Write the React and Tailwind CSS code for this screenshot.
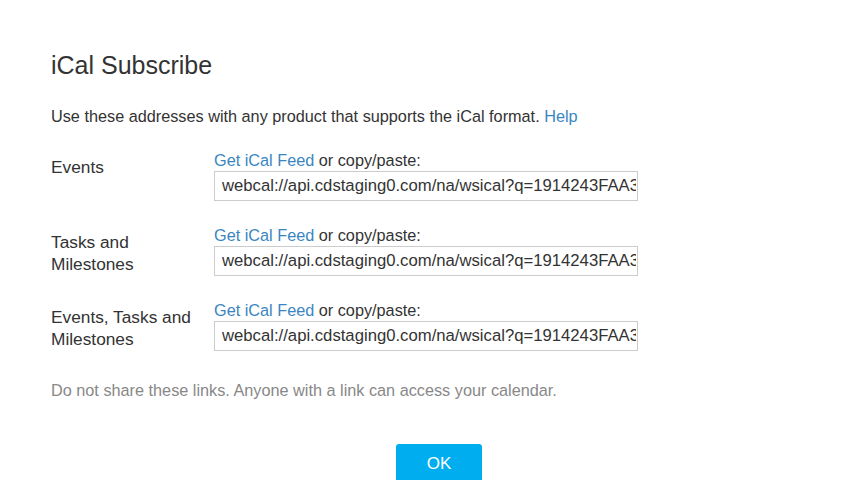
import React from 'react'

const feeds = [
    { label: 'Events', url: 'webcal://api.cdstaging0.com/na/wsical?q=1914243FAA3F0C2B7E1A9D4E8B6C2F1A' },
    { label: 'Tasks and Milestones', url: 'webcal://api.cdstaging0.com/na/wsical?q=1914243FAA3F0C2B7E1A9D4E8B6C2F1B' },
    { label: 'Events, Tasks and Milestones', url: 'webcal://api.cdstaging0.com/na/wsical?q=1914243FAA3F0C2B7E1A9D4E8B6C2F1C' },
]

export default function App() {
    return (
        <div className="w-[852px] h-[480px] overflow-hidden bg-white pl-[51px] pt-[50px] text-[#333]" style={{ fontFamily: '"Liberation Sans", Arial, sans-serif' }}>
            <h1 className="text-[25px] leading-[30px] font-normal">iCal Subscribe</h1>

            <p className="mt-[26px] text-[16.25px] leading-[20px]">
                Use these addresses with any product that supports the iCal format. <a href="#" className="text-[#3a86c1]">Help</a>
            </p>

            <div className="mt-[25px] flex flex-col gap-[25px]">
                {feeds.map((feed) => {
                    return <div key={feed.label} className="flex">
                        <div className="w-[163px] pt-[5px] pr-[10px] text-[17.3px] leading-[22px]">{feed.label}</div>
                        <div className="flex flex-col">
                            <div className="text-[16.25px] leading-[18px]">
                                <a href="#" className="text-[#3a86c1]">Get iCal Feed</a> or copy/paste:
                            </div>
                            <input
                                readOnly
                                value={feed.url}
                                className="mt-[2px] w-[424px] h-[30px] border border-[#cccccc] pl-[7px] pr-[1px] text-[16.7px] text-[#333] outline-none"
                                style={{ fontFamily: '"Liberation Sans", Arial, sans-serif' }}
                            />
                        </div>
                    </div>
                })}
            </div>

            <p className="mt-[29px] text-[16.25px] leading-[20px] text-[#888]">
                Do not share these links. Anyone with a link can access your calendar.
            </p>

            <button className="mt-[44px] ml-[345px] w-[86px] h-[40px] rounded-[3px] bg-[#00aeef] text-white text-[17px]">OK</button>
        </div>
    )
}
